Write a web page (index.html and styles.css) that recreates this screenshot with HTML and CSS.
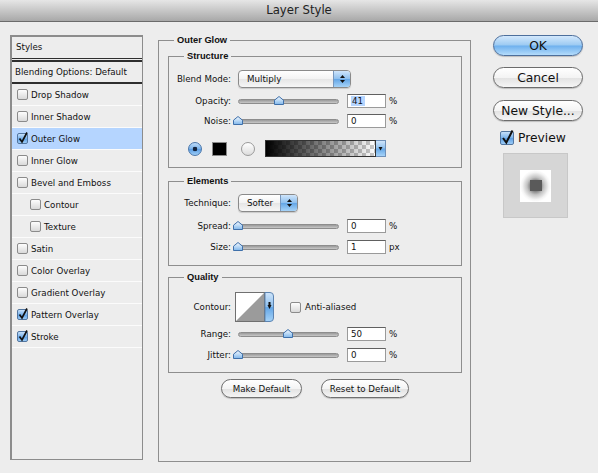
FILE: index.html
```html
<!DOCTYPE html>
<html lang="en">
<head>
  <meta charset="UTF-8" />
  <title>Layer Style</title>
  <link rel="stylesheet" href="styles.css">
</head>
<body>
  <svg class="defs" width="0" height="0" aria-hidden="true">
    <defs>
      <linearGradient id="thumbFill" x1="0" y1="0" x2="0" y2="1">
        <stop offset="0" stop-color="#f4f9fe"/>
        <stop offset="0.5" stop-color="#bcdaf6"/>
        <stop offset="1" stop-color="#7fb6ea"/>
      </linearGradient>
      <linearGradient id="aquaFill" x1="0" y1="0" x2="0" y2="1">
        <stop offset="0" stop-color="#cfe5fb"/>
        <stop offset="0.48" stop-color="#8fc0ee"/>
        <stop offset="0.52" stop-color="#64a6e6"/>
        <stop offset="1" stop-color="#a6d3f8"/>
      </linearGradient>
    </defs>
  </svg>

  <div class="titlebar">Layer Style</div>

  <div class="dialog">
    <!-- left list of effects -->
    <div class="styles-list">
      <div class="list-head">Styles</div>
      <div class="list-blend">Blending Options: Default</div>
      <div class="list-item"><span class="check"></span>Drop Shadow</div>
      <div class="list-item"><span class="check"></span>Inner Shadow</div>
      <div class="list-item active"><span class="check on"><svg width="12" height="13" viewBox="0 0 12 13"><path d="M2.5 7.5 L5 11 L10 1.5" fill="none" stroke="#111" stroke-width="1.7"/></svg></span>Outer Glow</div>
      <div class="list-item"><span class="check"></span>Inner Glow</div>
      <div class="list-item"><span class="check"></span>Bevel and Emboss</div>
      <div class="list-item sub"><span class="check"></span>Contour</div>
      <div class="list-item sub"><span class="check"></span>Texture</div>
      <div class="list-item"><span class="check"></span>Satin</div>
      <div class="list-item"><span class="check"></span>Color Overlay</div>
      <div class="list-item"><span class="check"></span>Gradient Overlay</div>
      <div class="list-item"><span class="check on"><svg width="12" height="13" viewBox="0 0 12 13"><path d="M2.5 7.5 L5 11 L10 1.5" fill="none" stroke="#111" stroke-width="1.7"/></svg></span>Pattern Overlay</div>
      <div class="list-item"><span class="check on"><svg width="12" height="13" viewBox="0 0 12 13"><path d="M2.5 7.5 L5 11 L10 1.5" fill="none" stroke="#111" stroke-width="1.7"/></svg></span>Stroke</div>
    </div>

    <!-- settings -->
    <div class="main">
      <div class="group outer">
        <div class="group-title">Outer Glow</div>

        <div class="group structure">
          <div class="group-title">Structure</div>
          <div class="row row-select">
            <span class="label">Blend Mode:</span>
            <div class="popup popup-blend">
              <span class="popup-text">Multiply</span>
              <span class="stepper"><svg width="7" height="10" viewBox="0 0 7 10"><polygon points="3.5,1 6,4 1,4" fill="#111"/><polygon points="1,6 6,6 3.5,9" fill="#111"/></svg></span>
            </div>
          </div>
          <div class="row row-opacity">
            <span class="label">Opacity:</span>
            <div class="slider"><div class="track"></div><svg class="thumb" style="left: 41px" width="10" height="9" viewBox="0 0 10 9"><polygon points="5,0.5 9.5,4.2 9.5,8.5 0.5,8.5 0.5,4.2" fill="url(#thumbFill)" stroke="#3f70aa"/></svg></div>
            <div class="field"><span class="selected">41</span></div>
            <span class="unit">%</span>
          </div>
          <div class="row">
            <span class="label">Noise:</span>
            <div class="slider"><div class="track"></div><svg class="thumb" style="left: 0px" width="10" height="9" viewBox="0 0 10 9"><polygon points="5,0.5 9.5,4.2 9.5,8.5 0.5,8.5 0.5,4.2" fill="url(#thumbFill)" stroke="#3f70aa"/></svg></div>
            <div class="field">0</div>
            <span class="unit">%</span>
          </div>
          <div class="row row-color">
            <span class="radio on"></span>
            <span class="swatch"></span>
            <span class="radio"></span>
            <span class="gradient"></span>
            <span class="gradient-arrow"><svg width="5" height="5" viewBox="0 0 5 5"><polygon points="0.5,1 4.5,1 2.5,4.5" fill="#111"/></svg></span>
          </div>
        </div>

        <div class="group elements">
          <div class="group-title">Elements</div>
          <div class="row row-select">
            <span class="label">Technique:</span>
            <div class="popup popup-technique">
              <span class="popup-text">Softer</span>
              <span class="stepper"><svg width="7" height="10" viewBox="0 0 7 10"><polygon points="3.5,1 6,4 1,4" fill="#111"/><polygon points="1,6 6,6 3.5,9" fill="#111"/></svg></span>
            </div>
          </div>
          <div class="row row-spread">
            <span class="label">Spread:</span>
            <div class="slider"><div class="track"></div><svg class="thumb" style="left: 0px" width="10" height="9" viewBox="0 0 10 9"><polygon points="5,0.5 9.5,4.2 9.5,8.5 0.5,8.5 0.5,4.2" fill="url(#thumbFill)" stroke="#3f70aa"/></svg></div>
            <div class="field">0</div>
            <span class="unit">%</span>
          </div>
          <div class="row row-size">
            <span class="label">Size:</span>
            <div class="slider"><div class="track"></div><svg class="thumb" style="left: 0px" width="10" height="9" viewBox="0 0 10 9"><polygon points="5,0.5 9.5,4.2 9.5,8.5 0.5,8.5 0.5,4.2" fill="url(#thumbFill)" stroke="#3f70aa"/></svg></div>
            <div class="field">1</div>
            <span class="unit">px</span>
          </div>
        </div>

        <div class="group quality">
          <div class="group-title">Quality</div>
          <div class="row row-contour">
            <span class="label">Contour:</span>
            <svg class="contour" width="39" height="30" viewBox="0 0 39 30">
              <rect x="0.5" y="0.5" width="29" height="29" fill="#fff" stroke="#707070"/>
              <polygon points="1,29 29,1 29,29" fill="#9b9b9b"/>
              <path d="M30 0.5 H35 A3.5 3.5 0 0 1 38.5 4 V26 A3.5 3.5 0 0 1 35 29.5 H30 Z" fill="url(#aquaFill)" stroke="#5d84b1"/>
              <polygon points="33.5,10 35.5,10 35.5,13 36.5,13 34.5,17 32.5,13 33.5,13" fill="#111"/>
            </svg>
            <span class="check aa"></span>
            <span class="aa-label">Anti-aliased</span>
          </div>
          <div class="row row-range">
            <span class="label">Range:</span>
            <div class="slider"><div class="track"></div><svg class="thumb" style="left: 50px" width="10" height="9" viewBox="0 0 10 9"><polygon points="5,0.5 9.5,4.2 9.5,8.5 0.5,8.5 0.5,4.2" fill="url(#thumbFill)" stroke="#3f70aa"/></svg></div>
            <div class="field">50</div>
            <span class="unit">%</span>
          </div>
          <div class="row row-jitter">
            <span class="label">Jitter:</span>
            <div class="slider"><div class="track"></div><svg class="thumb" style="left: 0px" width="10" height="9" viewBox="0 0 10 9"><polygon points="5,0.5 9.5,4.2 9.5,8.5 0.5,8.5 0.5,4.2" fill="url(#thumbFill)" stroke="#3f70aa"/></svg></div>
            <div class="field">0</div>
            <span class="unit">%</span>
          </div>
        </div>

        <div class="buttons">
          <button class="btn btn-make">Make Default</button>
          <button class="btn btn-reset">Reset to Default</button>
        </div>
      </div>
    </div>

    <!-- right column -->
    <div class="side">
      <button class="side-btn default">OK</button>
      <button class="side-btn cancel">Cancel</button>
      <button class="side-btn new-style">New Style...</button>
      <div class="preview-toggle">
        <span class="check big on"><svg width="15" height="16" viewBox="0 0 15 16"><path d="M3 9 L6.3 13.5 L12.5 1.5" fill="none" stroke="#111" stroke-width="2"/></svg></span>
        Preview
      </div>
      <div class="preview">
        <div class="preview-doc"><div class="preview-shape"></div></div>
      </div>
    </div>
  </div>
</body>
</html>
```

FILE: styles.css
```css
* {
  box-sizing: border-box;
}

body {
  margin: 0;
  width: 598px;
  height: 473px;
  overflow: hidden;
  background: #ededed;
  font-family: "DejaVu Sans", sans-serif;
  font-size: 8.7px;
  color: #111;
}

.defs {
  position: absolute;
  width: 0;
  height: 0;
}

.titlebar {
  height: 22px;
  border-bottom: 1px solid #6b6b6b;
  background: linear-gradient(#e6e6e6, #a8a8a8);
  font-size: 11.7px;
  line-height: 21px;
  text-align: center;
  color: #222;
}

.dialog {
  display: flex;
  align-items: flex-start;
  padding: 13px 0 0 10px;
}

/* ---- styles list ---- */

.styles-list {
  width: 133px;
  height: 425px;
  border: 1px solid #8c8c8c;
  border-left-width: 2px;
  border-top-width: 2px;
}

.list-head {
  height: 22px;
  padding-left: 4px;
  line-height: 21px;
  border-bottom: 1px solid #2e2e2e;
}

.list-blend {
  height: 24px;
  margin-top: 1px;
  padding-left: 3px;
  line-height: 20px;
  border-top: 2px solid #2e2e2e;
  border-bottom: 2px solid #2e2e2e;
}

.list-item {
  display: flex;
  align-items: center;
  height: 22px;
  padding-left: 5px;
  border-bottom: 1px solid #fbfbfb;
}

.list-item.sub {
  padding-left: 18px;
}

.list-item.active {
  background: #b5d5ff;
}

.check {
  position: relative;
  flex-shrink: 0;
  width: 11px;
  height: 11px;
  margin-right: 3px;
  border: 1px solid #8b8b8b;
  border-radius: 2px;
  background: linear-gradient(#fdfdfd, #d9d9d9);
}

.check.on {
  border-color: #5276a0;
  background: linear-gradient(#c6e0fa, #7ab3ec 50%, #5c9fe4 52%, #9ccbf6);
}

.check svg {
  position: absolute;
  left: -1px;
  top: -3px;
  overflow: visible;
}

.check.big {
  width: 14px;
  height: 14px;
  margin-right: 4px;
}

/* ---- groups ---- */

.main {
  width: 313px;
  margin: 5px 0 0 15px;
}

.group {
  position: relative;
  border: 1px solid #8e8e8e;
}

.group-title {
  position: absolute;
  top: -7px;
  left: 15px;
  padding: 0 3px;
  background: #ededed;
  font-family: "Liberation Sans", sans-serif;
  font-weight: bold;
  font-size: 9.3px;
  line-height: 12px;
}

.outer {
  height: 422px;
  padding: 15px 8px 0 9px;
}

.structure {
  height: 112px;
  padding-top: 13px;
}

.elements {
  height: 85px;
  margin-top: 13px;
  padding-top: 12px;
}

.quality {
  height: 96px;
  margin-top: 11px;
  padding-top: 14px;
}

.row {
  display: flex;
  align-items: center;
  height: 20px;
}

.row-select {
  height: 18px;
}

.row-opacity {
  margin-top: 3px;
}

.row-spread {
  margin-top: 4px;
}

.row-size,
.row-jitter {
  margin-top: 1px;
}

.row-range {
  margin-top: 2px;
}

.row-contour {
  height: 30px;
}

.label {
  flex-shrink: 0;
  width: 62px;
  text-align: right;
}

/* popup menus */

.popup {
  display: flex;
  height: 18px;
  margin-left: 7px;
  border: 1px solid #8a8a8a;
  border-radius: 4px;
  background: linear-gradient(#ffffff, #f3f3f3 50%, #e6e6e6 52%, #f6f6f6);
  box-shadow: 0 1px 1px rgba(0, 0, 0, 0.15);
}

.popup-blend {
  width: 113px;
}

.popup-technique {
  width: 60px;
}

.popup-text {
  flex: 1;
  padding-left: 8px;
  line-height: 16px;
}

.stepper {
  display: flex;
  align-items: center;
  justify-content: center;
  width: 17px;
  border-left: 1px solid #7897bd;
  border-radius: 0 3px 3px 0;
  background: linear-gradient(#cfe5fb, #8fc0ee 48%, #64a6e6 52%, #a6d3f8);
}

/* sliders */

.slider {
  position: relative;
  display: flex;
  align-items: center;
  width: 111px;
  height: 20px;
  margin-left: 2px;
}

.track {
  width: 101px;
  height: 5px;
  margin-left: 5px;
  border: 1px solid #8d8d8d;
  border-radius: 3px;
  background: linear-gradient(#9a9a9a, #c8c8c8);
}

.thumb {
  position: absolute;
  top: 5px;
}

.field {
  width: 39px;
  height: 14px;
  margin-left: 3px;
  padding-left: 3px;
  border: 1px solid #9a9a9a;
  border-top-color: #606060;
  background: #fff;
  line-height: 12px;
}

.selected {
  padding: 0 2px 0 1px;
  background: #b5d5ff;
}

.unit {
  margin-left: 3px;
}

/* colour row */

.row-color {
  height: 17px;
  margin-top: 9px;
  padding-left: 19px;
}

.radio {
  width: 14px;
  height: 14px;
  border: 1px solid #9a9a9a;
  border-radius: 50%;
  background: linear-gradient(#ffffff, #dcdcdc);
}

.radio.on {
  border-color: #4a76aa;
  background: radial-gradient(circle, #14253e 0 2px, transparent 2.6px),
    linear-gradient(#c0ddfa, #78b1ea 50%, #5a9de3 52%, #9dcdf7);
}

.swatch {
  width: 15px;
  height: 14px;
  margin: 0 14px 0 10px;
  border: 1px solid #8a8a8a;
  background: #000;
}

.gradient {
  width: 111px;
  height: 17px;
  margin-left: 10px;
  border: 1px solid #333;
  background: linear-gradient(to right, #000, rgba(0, 0, 0, 0)),
    repeating-conic-gradient(#c8c8c8 0 25%, #fff 0 50%) 0 0 / 8px 8px;
}

.gradient-arrow {
  display: flex;
  align-items: center;
  justify-content: center;
  width: 10px;
  height: 17px;
  border: 1px solid #6f90b8;
  border-left: none;
  background: linear-gradient(#cfe5fb, #8fc0ee 48%, #64a6e6 52%, #a6d3f8);
}

/* contour */

.contour {
  margin-left: 4px;
}

.check.aa {
  margin: 0 4px 0 16px;
}

/* buttons */

.buttons {
  display: flex;
  justify-content: center;
  gap: 19px;
  margin-top: 6px;
}

.btn {
  height: 19px;
  padding: 0;
  border: 1px solid #707070;
  border-radius: 10px;
  background: linear-gradient(#ffffff, #f4f4f4 50%, #e2e2e2 52%, #f5f5f5);
  box-shadow: 0 1px 1px rgba(0, 0, 0, 0.2);
  font-family: "DejaVu Sans", sans-serif;
  font-size: 8.7px;
  color: #111;
}

.btn-make {
  width: 81px;
}

.btn-reset {
  width: 88px;
}

/* right column */

.side {
  display: flex;
  flex-direction: column;
  width: 90px;
  margin-left: 22px;
}

.side-btn {
  height: 21px;
  padding: 0;
  border: 1px solid #6c6c6c;
  border-radius: 11px;
  background: linear-gradient(#ffffff, #f4f4f4 50%, #e2e2e2 52%, #f5f5f5);
  box-shadow: 0 1px 1px rgba(0, 0, 0, 0.2);
  font-family: "DejaVu Sans", sans-serif;
  font-size: 12.3px;
  color: #111;
}

.side-btn.default {
  border-color: #4d6f9c;
  background: linear-gradient(#d3e8fc, #9ccaf2 48%, #6eb0ee 52%, #b4dcfb);
}

.cancel {
  margin-top: 11px;
}

.new-style {
  margin-top: 12px;
}

.preview-toggle {
  display: flex;
  align-items: center;
  height: 14px;
  margin-top: 10px;
  padding-left: 7px;
  font-size: 12.3px;
}

.preview {
  display: flex;
  align-items: center;
  justify-content: center;
  width: 65px;
  height: 65px;
  margin: 8px 0 0 10px;
  border: 1px solid #c8c8c8;
  background: #d6d6d6;
}

.preview-doc {
  display: flex;
  align-items: center;
  justify-content: center;
  width: 31px;
  height: 32px;
  background: radial-gradient(closest-side, #7a7a7a 30%, #c4c4c4 55%, #f4f4f4 85%, #ffffff 100%);
}

.preview-shape {
  width: 12px;
  height: 11px;
  background: #5a5a5a;
}
```
